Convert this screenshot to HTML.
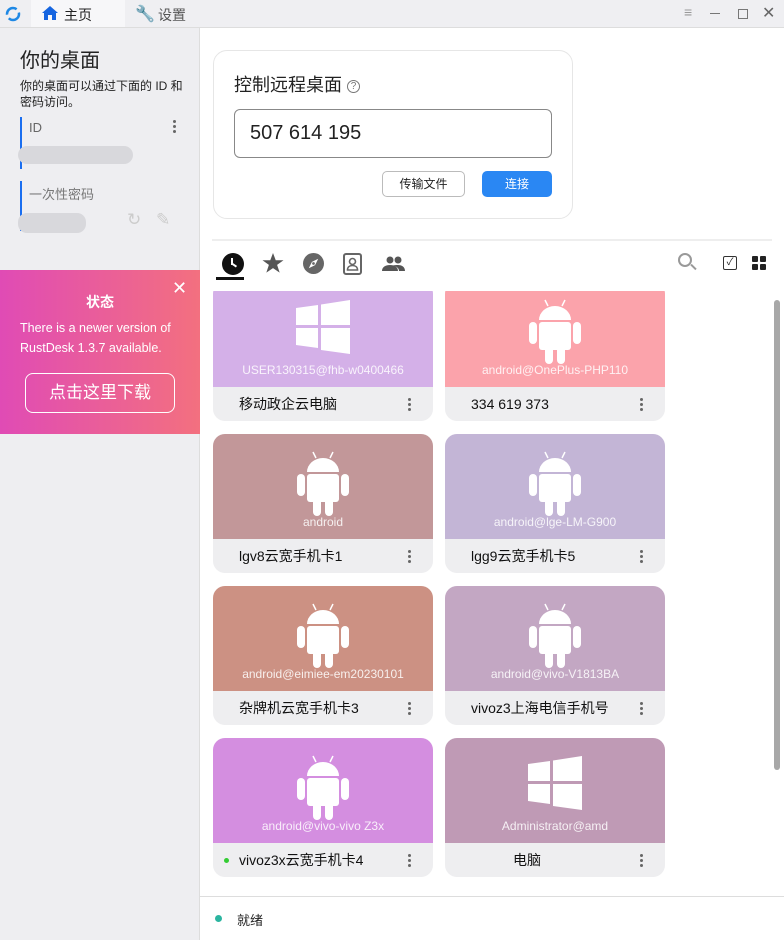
<!DOCTYPE html><html><head><meta charset="utf-8"><style>
*{margin:0;padding:0;box-sizing:border-box}
body{width:784px;height:940px;overflow:hidden;background:#fff;font-family:"Liberation Sans","Noto Sans CJK SC",sans-serif;position:relative;color:#222}
.abs{position:absolute}
.top{left:0;top:0;width:784px;height:28px;background:#efeff2;border-bottom:1px solid #ddd}
.left{left:0;top:28px;width:200px;height:912px;background:#eeeef1;border-right:1px solid #ddd}
.card{width:220px;height:139px;border-radius:12px;overflow:hidden;background:#eeeef0}
.card .img{height:105px;position:relative;color:#fff;text-align:center}
.card .img span{position:absolute;bottom:10px;left:0;right:0;font-size:12px;color:rgba(255,255,255,.85)}
.card .ft{height:34px;font-size:14px;line-height:34px;padding-left:26px;position:relative;color:#111}
.dots{position:absolute;right:22px;top:11px;width:3px}
.dots i{display:block;width:3px;height:3px;border-radius:2px;background:#666;margin-bottom:2px}
.icon{position:absolute;left:50%;top:12px;transform:translateX(-50%)}
</style></head><body>
<div class="abs top">
 <svg class="abs" style="left:5px;top:6px" width="16" height="16" viewBox="0 0 16 16"><circle cx="8" cy="8" r="6" fill="none" stroke="#1e88e5" stroke-width="2.5" stroke-dasharray="14 4"/></svg>
 <div class="abs" style="left:31px;top:0;width:94px;height:27px;background:#f7f7f9"></div>
 <svg class="abs" style="left:42px;top:6px" width="16" height="14" viewBox="0 0 16 14"><path d="M8 0L0 7h2v7h4V9h4v5h4V7h2z" fill="#1565e0"/></svg>
 <div class="abs" style="left:64px;top:5px;font-size:14px">主页</div>
 <div class="abs" style="left:135px;top:4px;color:#6aa9e8;font-size:16px">🔧</div>
 <div class="abs" style="left:158px;top:5px;font-size:14px;color:#555">设置</div>
 <div class="abs" style="left:684px;top:4px;color:#999;font-size:14px">≡</div>
 <div class="abs" style="left:710px;top:13px;width:10px;height:1px;background:#777"></div>
 <div class="abs" style="left:738px;top:9px;width:10px;height:10px;border:1px solid #777"></div>
 <div class="abs" style="left:762px;top:3px;color:#666;font-size:16px">✕</div>
</div>
<div class="abs left">
 <div class="abs" style="left:20px;top:16px;font-size:20px">你的桌面</div>
 <div class="abs" style="left:20px;top:50px;font-size:12px;line-height:16px;width:170px">你的桌面可以通过下面的 ID 和密码访问。</div>
 <div class="abs" style="left:20px;top:89px;width:2px;height:52px;background:#1a6ef0"></div>
 <div class="abs" style="left:29px;top:92px;font-size:13px;color:#666">ID</div>
 <div class="abs dots" style="left:173px;top:92px"><i></i><i></i><i></i></div>
 <div class="abs" style="left:18px;top:118px;width:115px;height:18px;background:#d8d8dc;border-radius:9px"></div>
 <div class="abs" style="left:20px;top:153px;width:2px;height:50px;background:#1a6ef0"></div>
 <div class="abs" style="left:29px;top:156px;font-size:13px;color:#777">一次性密码</div>
 <div class="abs" style="left:18px;top:185px;width:68px;height:20px;background:#d8d8dc;border-radius:9px"></div>
 <div class="abs" style="left:127px;top:182px;color:#ccc;font-size:17px">↻</div>
 <div class="abs" style="left:156px;top:182px;color:#ccc;font-size:17px">✎</div>
 <div class="abs" style="left:0;top:242px;width:200px;height:164px;background:linear-gradient(90deg,#e04bb5,#f3707f)">
  <div class="abs" style="left:0;right:0;top:22px;text-align:center;color:#fff;font-size:14px;font-weight:bold">状态</div>
  <div class="abs" style="left:172px;top:8px;color:#fff;font-size:18px">✕</div>
  <div class="abs" style="left:20px;top:48px;color:#fff;font-size:12.5px;line-height:20px;width:170px">There is a newer version of RustDesk 1.3.7 available.</div>
  <div class="abs" style="left:25px;top:103px;width:150px;height:40px;border:1px solid #fff;border-radius:8px;color:#fff;font-size:17px;text-align:center;line-height:38px">点击这里下载</div>
 </div>
</div>
<div class="abs" style="left:213px;top:50px;width:360px;height:169px;border:1px solid #e6e6e6;border-radius:14px">
 <div class="abs" style="left:20px;top:20px;font-size:18px">控制远程桌面 <span style="font-size:10px;color:#777;border:1px solid #777;border-radius:50%;display:inline-block;width:13px;height:13px;line-height:12px;text-align:center;vertical-align:2px">?</span></div>
 <div class="abs" style="left:20px;top:58px;width:318px;height:49px;border:1px solid #888;border-radius:6px;font-size:20px;line-height:47px;padding-left:15px">507 614 195</div>
 <div class="abs" style="left:168px;top:120px;width:83px;height:26px;border:1px solid #bbb;border-radius:5px;font-size:12px;text-align:center;line-height:24px">传输文件</div>
 <div class="abs" style="left:268px;top:120px;width:70px;height:26px;background:#2a87f3;border-radius:5px;font-size:12px;color:#fff;text-align:center;line-height:26px">连接</div>
</div>
<div class="abs" style="left:212px;top:239px;width:560px;height:2px;background:#eee"></div>
<div class="abs" style="left:222px;top:253px;width:22px;height:22px;border-radius:50%;background:#111"></div>
<div class="abs" style="left:231px;top:258px;width:2px;height:7px;background:#fff"></div>
<div class="abs" style="left:231px;top:264px;width:6px;height:2px;background:#fff;transform:rotate(35deg)"></div>
<div class="abs" style="left:216px;top:277px;width:28px;height:3px;background:#111"></div>
<svg class="abs" style="left:262px;top:253px" width="22" height="21" viewBox="0 0 24 23"><path d="M12 0l3 8h8.5l-7 5 2.8 8.5L12 16.5 4.7 21.5 7.5 13 .5 8H9z" fill="#555"/></svg>
<svg class="abs" style="left:303px;top:253px" width="21" height="21" viewBox="0 0 20 20"><circle cx="10" cy="10" r="10" fill="#666"/><path d="M14.5 5.5L11.5 11.5 5.5 14.5 8.5 8.5z" fill="#fff"/><circle cx="10" cy="10" r="1.3" fill="#666"/></svg>
<svg class="abs" style="left:343px;top:253px" width="19" height="22" viewBox="0 0 19 22"><rect x="1" y="1" width="17" height="20" rx="2" fill="none" stroke="#666" stroke-width="2"/><circle cx="9.5" cy="8.5" r="3" fill="none" stroke="#666" stroke-width="1.6"/><path d="M4.5 17c0-3 2.2-4.5 5-4.5s5 1.5 5 4.5z" fill="none" stroke="#666" stroke-width="1.6"/></svg>
<svg class="abs" style="left:382px;top:256px" width="23" height="16" viewBox="0 0 23 16"><circle cx="8" cy="4" r="3.5" fill="#555"/><circle cx="16" cy="4" r="3.5" fill="#555"/><path d="M0 15c0-4 3.5-6 8-6s8 2 8 6zM11 9.5c1.5-.4 3-.5 5-.5 4 0 7 2 7 6h-6c0-2.5-2-4.5-6-5.5z" fill="#555"/></svg>
<div class="abs" style="left:678px;top:253px;width:14px;height:14px;border:2px solid #999;border-radius:50%"></div>
<div class="abs" style="left:690px;top:266px;width:7px;height:2px;background:#999;transform:rotate(45deg)"></div>
<div class="abs" style="left:723px;top:256px;width:14px;height:14px;border:1.5px solid #333;border-radius:2px;font-size:10px;text-align:center;line-height:12px">✓</div>
<div class="abs" style="left:752px;top:256px;width:14px;height:14px;display:grid;grid-template-columns:6px 6px;gap:2px"><i style="background:#222;border-radius:1px"></i><i style="background:#222;border-radius:1px"></i><i style="background:#222;border-radius:1px"></i><i style="background:#222;border-radius:1px"></i></div>
<div class="abs" style="left:774px;top:300px;width:6px;height:470px;background:#a8a8a8;border-radius:3px"></div>

<div class="abs" style="left:200px;top:291px;width:574px;height:605px;overflow:hidden">
<div id="g"></div>
</div>
<script>
var c=[["#d4b0e8","w","USER130315@fhb-w0400466","移动政企云电脑"],["#fba3ab","a","android@OnePlus-PHP110","334 619 373"],
["#c29799","a","android","lgv8云宽手机卡1"],["#c3b5d6","a","android@lge-LM-G900","lgg9云宽手机卡5"],
["#cc9183","a","android@eimiee-em20230101","杂牌机云宽手机卡3"],["#c3a7c3","a","android@vivo-V1813BA","vivoz3上海电信手机号"],
["#d48ee0","a","android@vivo-vivo Z3x","vivoz3x云宽手机卡4"],["#bf9ab5","w","Administrator@amd","　　　电脑"]];
var A='<svg class="icon" width="56" height="70" viewBox="0 0 56 70" fill="#fff"><path d="M12 26a16 14 0 0 1 32 0z"/><line x1="18" y1="6" x2="21" y2="12" stroke="#fff" stroke-width="1.5"/><line x1="38" y1="6" x2="35" y2="12" stroke="#fff" stroke-width="1.5"/><rect x="12" y="28" width="32" height="28" rx="3"/><rect x="2" y="28" width="8" height="22" rx="4"/><rect x="46" y="28" width="8" height="22" rx="4"/><rect x="18" y="52" width="8" height="18" rx="4"/><rect x="30" y="52" width="8" height="18" rx="4"/></svg>';
var W='<svg class="icon" style="top:18px" width="54" height="54" viewBox="0 0 54 54" fill="#fff"><path d="M0 8l22-3v20H0zM25 4.5L54 0v25H25zM0 28h22v20L0 45zM25 28h29v26l-29-4z"/></svg>';
var h='';
for(var i=0;i<8;i++){var x=13+(i%2)*232,y=-9+Math.floor(i/2)*152;
h+='<div class="abs card" style="left:'+x+'px;top:'+y+'px"><div class="img" style="background:'+c[i][0]+'">'+(c[i][1]=="a"?A:W)+'<span>'+c[i][2]+'</span></div><div class="ft">'+c[i][3]+'<div class="dots"><i></i><i></i><i></i></div></div></div>';}
document.getElementById('g').innerHTML=h;
</script>
<div class="abs" style="left:224px;top:858px;width:5px;height:5px;border-radius:50%;background:#3c3"></div>
<div class="abs" style="left:200px;top:896px;width:584px;height:1px;background:#ddd"></div>
<div class="abs" style="left:215px;top:915px;width:7px;height:7px;border-radius:50%;background:#2bb5a0"></div>
<div class="abs" style="left:237px;top:910px;font-size:13px">就绪</div>
</body></html>
